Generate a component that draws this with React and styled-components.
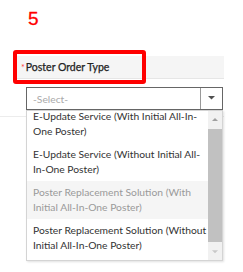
import React from "react";
import styled, { createGlobalStyle } from "styled-components";

const GlobalStyle = createGlobalStyle`
  html, body {
    margin: 0;
    padding: 0;
    background: #fff;
  }
  body {
    font-family: Lato, "Open Sans", sans-serif;
    color: #333;
  }
`;

// the list wraps each option the way the original page does
const options = [
  { lines: ["E-Update Service (With Initial All-In-", "One Poster)"] },
  { lines: ["E-Update Service (Without Initial All-", "In-One Poster)"] },
  { lines: ["Poster Replacement Solution (With", "Initial All-In-One Poster)"], muted: true },
  { lines: ["Poster Replacement Solution (Without", "Initial All-In-One Poster)"] },
];

const Page = styled.div`
  width: 243px;
  height: 272px;
  overflow: hidden;
`;

const StepNumber = styled.div`
  padding: 10px 0 0 28px;
  font-family: "Liberation Sans", Arial, sans-serif;
  font-size: 19px;
  line-height: 18px;
  color: #ff0000;
  -webkit-text-stroke: 0.3px #ff0000;
`;

const Section = styled.div`
  position: relative;
  margin-top: 28px;
`;

const LabelBar = styled.div`
  display: flex;
  align-items: center;
  margin-left: 16px;
  width: 208px;
  height: 23px;
  padding-left: 5px;
  box-sizing: border-box;
  background: #f5f5f5;
  border-bottom: 1px solid #e6e6e6;
  font-size: 10.5px;
  color: #222;
  -webkit-text-stroke: 0.25px #222;
`;

const Required = styled.span`
  color: #ff3b3b;
  font-size: 9px;
  -webkit-text-stroke: 0;
  margin-right: 1px;
`;

const Highlight = styled.div`
  position: absolute;
  left: 13px;
  top: -6px;
  width: 133px;
  height: 34px;
  box-sizing: border-box;
  border: 4px solid #ff0000;
  border-radius: 3px;
`;

const FieldRow = styled.div`
  position: relative;
  width: 224px;
  padding: 8px 0 6px 26px;
  box-sizing: border-box;
  border-bottom: 1px solid #ececec;
`;

const SelectBox = styled.div`
  display: flex;
  width: 197px;
  height: 23px;
  box-sizing: border-box;
  border: 1px solid #666;
  background: #fff;
`;

const SelectText = styled.div`
  flex: 1;
  display: flex;
  align-items: center;
  padding-left: 6px;
  font-size: 10.3px;
  color: #aaa;
`;

const ArrowCell = styled.div`
  width: 21px;
  display: flex;
  align-items: center;
  justify-content: center;
  border-left: 1px solid #999;
`;

const Dropdown = styled.div`
  position: absolute;
  left: 26px;
  top: 31px;
  width: 197px;
  height: 151px;
  box-sizing: border-box;
  display: flex;
  background: #fff;
  border: 1px solid #d4d4d4;
  box-shadow: 1px 1px 2px rgba(0, 0, 0, 0.12);
`;

const OptionList = styled.div`
  flex: 1;
  min-width: 0;
  overflow: hidden;
`;

const OptionScroller = styled.div`
  margin-top: -6px;
`;

const Option = styled.div`
  padding: 4px 0 4px 6px;
  font-size: 10.3px;
  line-height: 15px;
  white-space: nowrap;
  color: ${(p) => (p.$muted ? "#9a9a9a" : "#333")};
  background: ${(p) => (p.$muted ? "#f5f5f5" : "transparent")};
`;

const OptionLine = styled.div``;

const Scrollbar = styled.div`
  width: 14px;
  flex-shrink: 0;
  display: flex;
  flex-direction: column;
  background: #f1f1f1;
`;

const ScrollButton = styled.div`
  height: 16px;
  display: flex;
  align-items: center;
  justify-content: center;
`;

const Thumb = styled.div`
  flex: 1;
  margin: 2px 0;
  background: #c1c1c1;
`;

const Triangle = ({ up, color = "#505050", size = 7 }) => (
  <svg width={size} height={size / 2 + 1} viewBox="0 0 8 5">
    <path d={up ? "M0 5 L4 1 L8 5 Z" : "M0 0 L8 0 L4 4 Z"} fill={color} />
  </svg>
);

export default function App() {
  return (
    <Page>
      <GlobalStyle />
      <StepNumber>5</StepNumber>
      <Section>
        <LabelBar>
          <Required>*</Required>Poster Order Type
        </LabelBar>
        <Highlight />
        <FieldRow>
          <SelectBox>
            <SelectText>-Select-</SelectText>
            <ArrowCell>
              <Triangle />
            </ArrowCell>
          </SelectBox>
          <Dropdown>
            <OptionList>
              <OptionScroller>
                {options.map((o) => (
                  <Option key={o.lines[0]} $muted={o.muted}>
                    {o.lines.map((line) => (
                      <OptionLine key={line}>{line}</OptionLine>
                    ))}
                  </Option>
                ))}
              </OptionScroller>
            </OptionList>
            <Scrollbar>
              <ScrollButton>
                <Triangle up color="#a0a0a0" size={6} />
              </ScrollButton>
              <Thumb />
              <ScrollButton>
                <Triangle color="#c8c8c8" size={6} />
              </ScrollButton>
            </Scrollbar>
          </Dropdown>
        </FieldRow>
      </Section>
    </Page>
  );
}
